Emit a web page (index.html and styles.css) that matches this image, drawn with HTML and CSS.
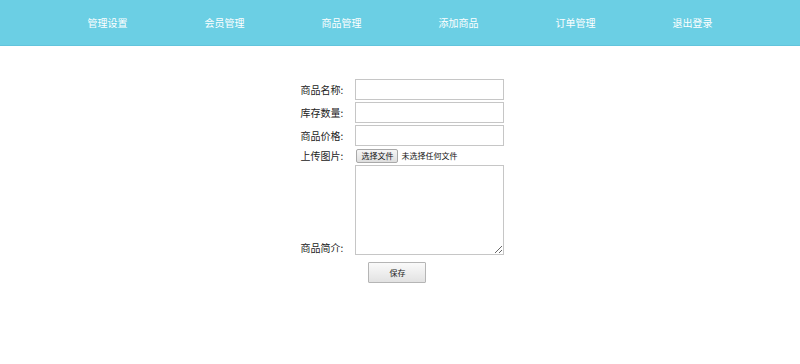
FILE: index.html
```html
<!DOCTYPE html>
<html lang="zh-CN">
<head>
<meta charset="utf-8">
<title>添加商品</title>
<link rel="stylesheet" href="styles.css">
</head>
<body>
<header class="topbar">
  <ul class="nav">
    <li><a href="#">管理设置</a></li>
    <li><a href="#">会员管理</a></li>
    <li><a href="#">商品管理</a></li>
    <li><a href="#">添加商品</a></li>
    <li><a href="#">订单管理</a></li>
    <li><a href="#">退出登录</a></li>
  </ul>
</header>
<main class="main">
  <form class="goods-form">
    <label class="lbl">商品名称:</label>
    <input class="field" type="text">
    <label class="lbl">库存数量:</label>
    <input class="field" type="text">
    <label class="lbl">商品价格:</label>
    <input class="field" type="text">
    <label class="lbl lbl-file">上传图片:</label>
    <div class="file-row">
      <span class="file-btn">选择文件</span>
      <span class="file-note">未选择任何文件</span>
    </div>
    <label class="lbl lbl-bottom">商品简介:</label>
    <textarea class="area"></textarea>
    <span></span>
    <div class="actions"><button type="button" class="save">保存</button></div>
  </form>
</main>
</body>
</html>
```
FILE: styles.css
```css
* { box-sizing: border-box; }
html, body { margin: 0; padding: 0; background: #fff; }
body { font-family: "Noto Sans CJK SC", "Noto Sans", sans-serif; color: #222; }

.topbar {
  height: 46px;
  background: #6bcfe4;
  border-bottom: 1px solid #62c4dc;
}
.nav {
  list-style: none;
  margin: 0 auto;
  padding: 0;
  width: 702px;
  display: flex;
}
.nav li { width: 117px; text-align: center; }
.nav a {
  display: block;
  line-height: 45px;
  color: #fff;
  font-size: 10px;
  text-decoration: none;
}

.main { padding-top: 33px; }
.goods-form {
  display: grid;
  grid-template-columns: auto 149px;
  column-gap: 12px;
  row-gap: 2px;
  justify-content: center;
  align-items: center;
  padding-left: 5px;
}
.lbl {
  font-size: 10px;
  color: #222;
  text-align: right;
  line-height: 14px;
}
.lbl-bottom { align-self: end; }
.field {
  display: block;
  width: 149px;
  height: 21px;
  margin: 0;
  border: 1px solid #c6c6c6;
  background: #fff;
}
.file-row { display: flex; align-items: center; height: 15px; }
.file-btn {
  display: inline-block;
  font-size: 8px;
  line-height: 12px;
  height: 14px;
  padding: 0 4px;
  border: 1px solid #a9a9a9;
  border-radius: 2px;
  background: linear-gradient(#f6f6f6, #dedede);
  color: #111;
  margin-left: 1px;
}
.file-note { font-size: 8px; color: #111; margin-left: 3px; }
.area {
  display: block;
  width: 149px;
  height: 90px;
  margin: 0;
  border: 1px solid #c6c6c6;
  resize: both;
}
.actions { display: flex; padding-top: 5px; }
.save {
  display: block;
  margin-left: 13px;
  width: 58px;
  height: 21px;
  font-family: inherit;
  font-size: 8px;
  color: #222;
  border: 1px solid #b5b5b5;
  border-radius: 1px;
  background: linear-gradient(#fafafa, #e2e2e2);
  padding: 0;
}
```
